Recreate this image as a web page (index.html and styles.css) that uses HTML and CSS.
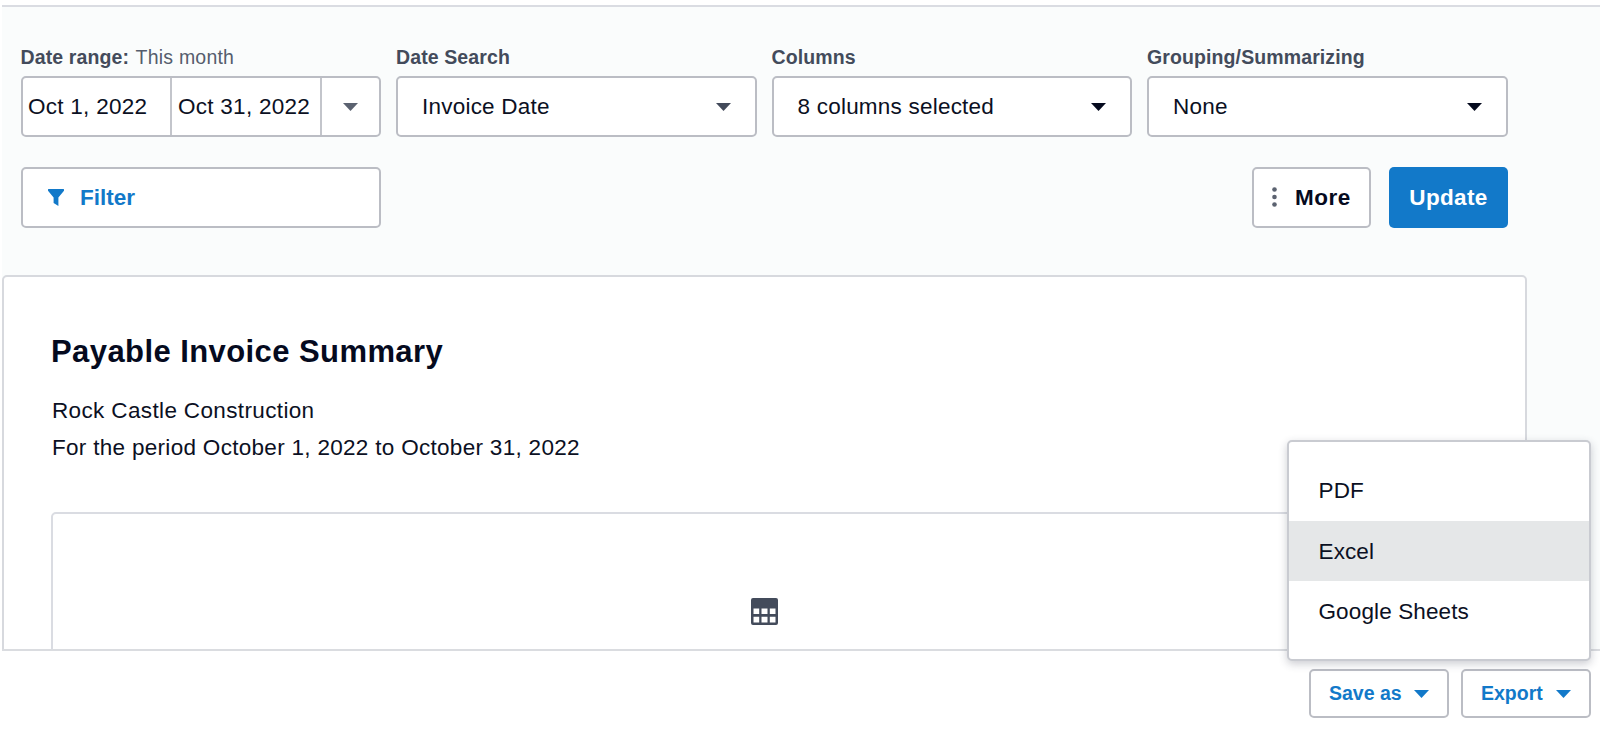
FILE: index.html
```html
<!DOCTYPE html>
<html lang="en">
<head>
<meta charset="utf-8">
<title>Payable Invoice Summary</title>
<link rel="stylesheet" href="styles.css">
</head>
<body>
<div class="app">
  <main class="report">
    <section class="toolbar">
      <div class="fields">
        <div class="field">
          <div class="label"><b>Date range:</b> <span class="light">This month</span></div>
          <div class="control range">
            <span class="cell">Oct 1, 2022</span>
            <span class="cell">Oct 31, 2022</span>
            <span class="toggle"><svg class="caret slate" viewBox="0 0 15 8"><path d="M0 0h15L7.5 8z"/></svg></span>
          </div>
        </div>
        <div class="field">
          <div class="label"><b>Date Search</b></div>
          <div class="control select"><span>Invoice Date</span><svg class="caret dusk" viewBox="0 0 15 8"><path d="M0 0h15L7.5 8z"/></svg></div>
        </div>
        <div class="field">
          <div class="label"><b>Columns</b></div>
          <div class="control select"><span>8 columns selected</span><svg class="caret" viewBox="0 0 15 8"><path d="M0 0h15L7.5 8z"/></svg></div>
        </div>
        <div class="field">
          <div class="label"><b>Grouping/Summarizing</b></div>
          <div class="control select"><span>None</span><svg class="caret" viewBox="0 0 15 8"><path d="M0 0h15L7.5 8z"/></svg></div>
        </div>
      </div>
      <div class="actions">
        <div class="control filter"><svg class="funnel" viewBox="0 0 16 17"><path d="M.5 0h15q.5 0 .5.6v1.2L10.4 8.600V17L5.600 14V8.600L0 1.800V.6Q0 0 .5 0z"/></svg><span>Filter</span></div>
        <div class="buttons">
          <div class="control more"><svg class="dots" viewBox="0 0 5 20"><circle cx="2.5" cy="2.5" r="2.3"/><circle cx="2.5" cy="10" r="2.3"/><circle cx="2.5" cy="17.5" r="2.3"/></svg><span>More</span></div>
          <div class="update"><span>Update</span></div>
        </div>
      </div>
    </section>
    <section class="card">
      <h1>Payable Invoice Summary</h1>
      <p class="company">Rock Castle Construction</p>
      <p class="period">For the period October 1, 2022 to October 31, 2022</p>
      <div class="panel">
        <svg class="table-icon" viewBox="0 0 27 27"><path fill-rule="evenodd" d="M2 0h23q2 0 2 2v23q0 2-2 2H2q-2 0-2-2V2q0-2 2-2zM2.5 10.500v5.500h5.700v-5.500zM10.500 10.500v5.500h6v-5.500zM18.800 10.500v5.500h5.700v-5.500zM2.500 18.700v5.800h5.700v-5.800zM10.500 18.700v5.800h6v-5.800zM18.800 18.700v5.800h5.700v-5.800z"/></svg>
      </div>
    </section>
  </main>
  <footer class="footer">
    <div class="control small save"><span>Save as</span><svg class="caret" viewBox="0 0 15 8"><path d="M0 0h15L7.5 8z"/></svg></div>
    <div class="export">
      <div class="menu">
        <div class="item"><span>PDF</span></div>
        <div class="item active"><span>Excel</span></div>
        <div class="item"><span>Google Sheets</span></div>
      </div>
      <div class="control small"><span>Export</span><svg class="caret" viewBox="0 0 15 8"><path d="M0 0h15L7.5 8z"/></svg></div>
    </div>
  </footer>
</div>
</body>
</html>
```
FILE: styles.css
```css
* { box-sizing: border-box; }
body {
  margin: 0;
  background: #fff;
  color: #0b1023;
  font-family: "Liberation Sans", Arial, sans-serif;
  font-size: 22.5px;
  white-space: nowrap;
  overflow: hidden;
}
.app {
  height: 738px;
  width: 1598px;
  margin-left: 2px;
  padding-top: 5px;
}
.report {
  height: 646px;
  overflow: hidden;
  background: #fafcfc;
  border-top: 2px solid #dadce2;
  border-bottom: 2px solid #dadce0;
}
.toolbar {
  height: 268px;
  padding: 38px 0 0 18.5px;
}
.fields { display: flex; gap: 15px; }
.field { width: 360.500px; }
.label {
  height: 31px;
  line-height: 24px;
  font-size: 19.5px;
  letter-spacing: .11px;
  color: #434b5b;
}
.light { color: #555d6d; letter-spacing: .22px; margin-left: 1px; }
.control {
  display: flex;
  align-items: center;
  height: 61px;
  background: #fff;
  border: 2px solid #bbbdc4;
  border-radius: 5px;
}
.select { justify-content: space-between; padding: 0 24px; letter-spacing: .22px; }
.caret { width: 15px; height: 8px; fill: #050a1e; flex: none; }
.caret.slate { fill: #5b6270; }
.caret.dusk { fill: #434a5a; }
.cell {
  width: 150.300px;
  height: 57px;
  line-height: 58px;
  padding-left: 6px;
  letter-spacing: .27px;
  border-right: 2px solid #c3c5cb;
}
.cell:first-child { width: 149.500px; padding-left: 5.500px; }
.toggle { flex: 1; display: flex; justify-content: center; }
.actions {
  display: flex;
  justify-content: space-between;
  width: 1487.500px;
  margin-top: 30px;
  font-weight: bold;
}
.filter { width: 360.500px; padding-left: 25px; gap: 16.500px; color: #1279c9; }
.filter span, .more span, .update span { margin-top: 1px; }
.funnel { width: 16px; height: 17px; fill: #1279c9; }
.buttons { display: flex; gap: 18px; }
.more { width: 119px; padding-left: 18px; gap: 18px; color: #050a1e; letter-spacing: .5px; }
.dots { width: 5px; height: 20px; margin-top: -1px; fill: #5b6270; }
.update {
  display: flex;
  align-items: center;
  justify-content: center;
  width: 119px;
  height: 61px;
  border-radius: 5px;
  background: #1279c9;
  color: #fff;
  letter-spacing: .35px;
}
.card {
  width: 1525px;
  height: 400px;
  padding: 54.500px 47.500px 0 47px;
  background: #fff;
  border: 2px solid #d7d9de;
  border-radius: 5px;
}
h1 { margin: 0; font-size: 31px; line-height: 40px; letter-spacing: .42px; color: #050a1e; }
p { margin: 0; line-height: 36.500px; padding-left: 1px; }
.company { margin-top: 21.500px; letter-spacing: .36px; }
.period { letter-spacing: .3px; }
.panel {
  display: flex;
  justify-content: center;
  height: 300px;
  margin-top: 46px;
  padding-top: 83.500px;
  border: 2px solid #dadce2;
  border-radius: 5px;
}
.table-icon { width: 27px; height: 27px; fill: #434b5b; }
.footer {
  display: flex;
  justify-content: flex-end;
  gap: 12px;
  padding: 18px 9px 0 0;
}
.small {
  width: 130px;
  height: 49px;
  padding: 0 18px;
  justify-content: space-between;
  color: #1279c9;
  font-size: 19.5px;
  font-weight: bold;
}
.save { width: 140px; }
.small .caret { fill: #1279c9; }
.export { position: relative; }
.menu {
  position: absolute;
  right: 0;
  bottom: 57px;
  width: 304px;
  height: 221px;
  padding-top: 18px;
  background: #fff;
  border: 2px solid #c9cbd1;
  border-radius: 5px;
  box-shadow: 0 3px 8px rgba(40, 48, 66, .24);
}
.item { height: 60.700px; line-height: 61px; padding-left: 29.500px; letter-spacing: .12px; }
.active { background: #e5e7e8; }
```
